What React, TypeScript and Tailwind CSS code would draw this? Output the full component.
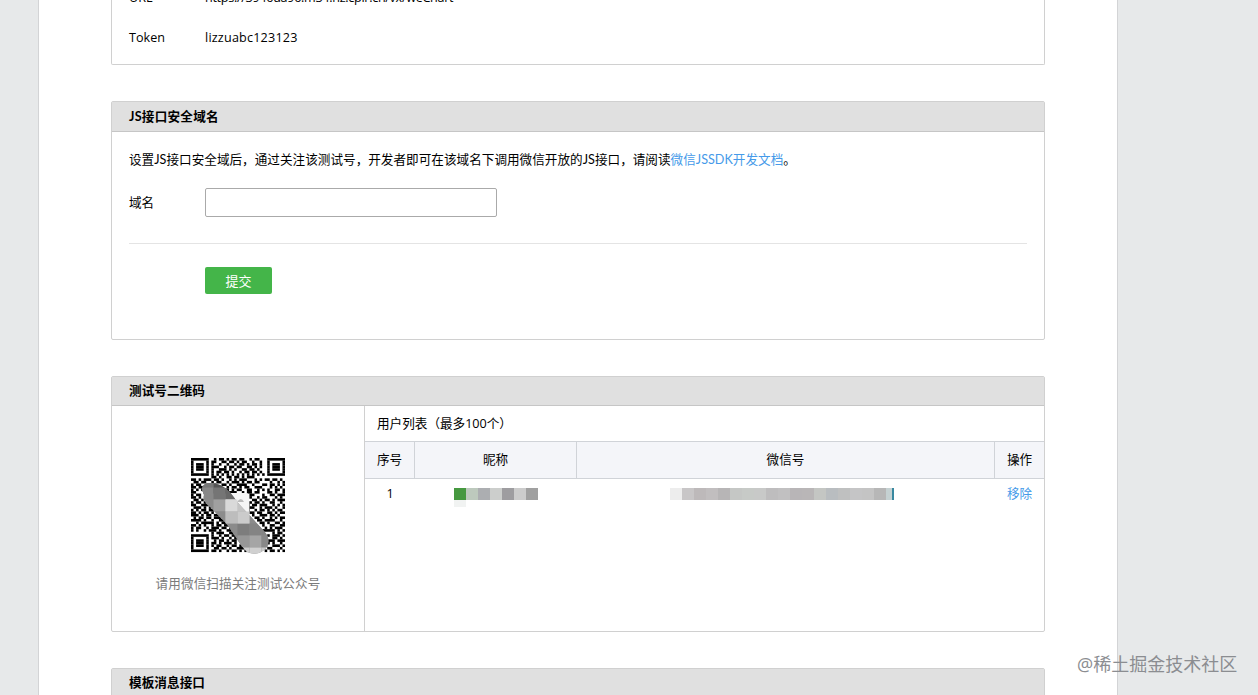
import type { ReactNode } from "react";

const qrRows = [
  "1111111001011010110110010110001111111",
  "1000001011001101101011001001001000001",
  "1011101010010010010110101101001011101",
  "1011101011100101101100110101001011101",
  "1011101010011101010011011010001011101",
  "1000001010110110100101101101001000001",
  "1111111010101010101010101010101111111",
  "0000000011010011011010111000000000000",
  "1101011101101001010111000101011011010",
  "0110110010110010111010110110000100101",
  "1011001101001101001111001000110110101",
  "1101100010110010110101100111000101010",
  "1010111001000110101100110010101001101",
  "1100010110000001110010110110001101001",
  "1011000100000000111101011000100110111",
  "1101000000000000010110010010110001010",
  "0110100000000000000111001101011010111",
  "1011010000000000000011010110100110010",
  "1100111000000000000000101101110010101",
  "0111010100000000000001011001011101001",
  "1010110110000000000001100101101010110",
  "1101011010000000000000011011001101011",
  "1110101101100000000000001001110110100",
  "0101101101110000000000000110100101011",
  "1111010010011100000000000011011110010",
  "0010111110101100000000000001101001101",
  "1101010010110110000000000000100110011",
  "1011001011101101100000000000010101110",
  "1010010111010011010000000000111110101",
  "0000000010111001101000000000100010110",
  "1111111010010110110100000000101011101",
  "1000001011101001011000000000100011010",
  "1011101001011010110110000000111110111",
  "1011101011010111010011000001011010010",
  "1011101010110010110100100011010011101",
  "1000001001101101001110110101101100010",
  "1111111011010010110101001110010110101",
];

const mosaic: [number, number, string][] = [
  [0, 6, "#777"], [12, 6, "#555"], [24, 6, "#5a5a5a"],
  [0, 12, "#888"], [12, 12, "#757575"], [24, 12, "#686868"], [36, 12, "#777"],
  [12, 24, "#a0a0a0"], [24, 24, "#d9d9d9"], [36, 24, "#c4c4c4"],
  [12, 36, "#8c8c8c"], [24, 36, "#aaa"], [36, 36, "#cbcbcb"], [48, 36, "#8b8b8b"],
  [24, 48, "#8b8b8b"], [36, 48, "#7d7d7d"], [48, 48, "#848484"], [60, 48, "#858585"],
  [36, 60, "#979797"], [48, 60, "#a5a5a5"], [60, 60, "#888"], [36, 72, "#ccc"], [48, 72, "#d0d0d0"], [60, 72, "#c8c8c8"],
];

function QrCode() {
  return (
    <svg className="block h-[94px] w-[94px] overflow-visible" viewBox="0 0 94 94">
      <defs>
        <clipPath id="stroke-mask">
          <path d="M13 37 Q7 25 20 25 C34 26 39 34 48 46 L73 73 Q80 81 76 89 Q68 99 56 94 C48 86 43 75 34 64 L19 49 Q11 43 13 37Z" />
        </clipPath>
      </defs>
      <g transform="scale(2.5405)" shapeRendering="geometricPrecision">
        {qrRows.flatMap((row, y) =>
          (row.match(/1+|0+/g) ?? []).reduce<{ x: number; nodes: ReactNode[] }>(
            (acc, run) => {
              if (run[0] === "1") {
                acc.nodes.push(<rect key={`${y}-${acc.x}`} x={acc.x} y={y} width={run.length} height="1.03" />);
              }
              acc.x += run.length;
              return acc;
            },
            { x: 0, nodes: [] },
          ).nodes,
        )}
      </g>
      <rect x="35" y="35" width="23" height="23" rx="3" fill="#f5f5f5" />
      <path d="M46 44q4-6 7 0" fill="#bbb" />
      <g clipPath="url(#stroke-mask)">
        <rect width="94" height="100" fill="#8b8b8b" />
        {mosaic.map(([x, y, fill]) => (
          <rect key={`${x}-${y}`} x={x + 10.5} y={y + 17.5} width="12" height="12" fill={fill} />
        ))}
      </g>
      <rect x="34.5" y="41.5" width="12" height="12" fill="#d9d9d9" />
      <rect x="46.5" y="53.5" width="12" height="12" fill="#cbcbcb" />
      <rect x="34.5" y="53.5" width="12" height="12" fill="#bdbdbd" />
    </svg>
  );
}

function Header({ children }: { children: ReactNode }) {
  return (
    <div className="flex h-[29px] items-center border-b border-[#c6c6c6] bg-[#e0e0e0] pl-[17px] font-bold tracking-[0.08px]">
      {children}
    </div>
  );
}

function Js({ children }: { children: string }) {
  return <span className="font-['Lato',sans-serif]">{children}</span>;
}

const nameCells = ["bg-[#469940]", "bg-[#bdc9bd]", "bg-[#acaeb1]", "bg-[#cccecc]", "bg-[#9e9da0]", "bg-[#cccccc]", "bg-[#a0a0a0]"];
const idCells = [
  "w-3 bg-[#ededed]", "w-3 bg-[#c8c6c7]", "w-3 bg-[#bdb9ba]", "w-3 bg-[#c1bebf]", "w-3 bg-[#b7b5b6]",
  "w-3 bg-[#c5c7c5]", "w-3 bg-[#c7cac7]", "w-3 bg-[#c8c9c8]", "w-3 bg-[#bebdbe]", "w-3 bg-[#c1c0c1]",
  "w-3 bg-[#b8b5b7]", "w-3 bg-[#b9b6b7]", "w-3 bg-[#c4c6c3]", "w-3 bg-[#b9bdc0]", "w-3 bg-[#bfc0c0]",
  "w-3 bg-[#c5c5c6]", "w-3 bg-[#c4c4c4]", "w-3 bg-[#b7b7b7]", "w-[6px] bg-[#c5d1d2]", "w-[2px] bg-[#3888a0]",
];

export default function App() {
  return (
    <div className="relative h-[695px] w-full overflow-hidden bg-[#e7e9ea] font-['Open_Sans','Noto_Sans_CJK_SC',sans-serif] text-[12.6px] leading-5 text-black">
      <main className="ml-[38px] h-[695px] w-[1080px] border-x border-[#d3d4d6] bg-white px-[72px]">
        <section className="h-[65px] overflow-hidden rounded-b-[2px] border-x border-b border-[#d0d0d0] pl-[17px]">
          <div className="-mt-3 flex h-5">
            <span className="w-[76px]">URL</span>
            <span className="tracking-[-0.3px]">https://3946da96.m34.nz.cplr.cn/vx/weChart</span>
          </div>
          <div className="mt-5 flex h-5">
            <span className="w-[76px]">Token</span>
            <span className="tracking-[0.2px]">lizzuabc123123</span>
          </div>
        </section>

        <section className="mt-9 h-[239px] rounded-[2px] border border-[#d0d0d0]">
          <div className="flex h-[30px] items-center border-b border-[#c6c6c6] bg-[#e0e0e0] pl-[17px] font-bold tracking-[0.25px]">
            <Js>JS</Js>接口安全域名
          </div>
          <div className="px-[17px]">
            <p className="pt-[18px] tracking-[0.02px] whitespace-nowrap">
              设置<Js>JS</Js>接口安全域后，通过关注该测试号，开发者即可在该域名下调用微信开放的<Js>JS</Js>接口，请阅读<a className="text-[#459ae9]">微信<Js>JSSDK</Js>开发文档</a>。
            </p>
            <div className="mt-[18px] flex items-center">
              <label className="w-[76px]">域名</label>
              <input className="h-[29px] w-[292px] rounded-[2px] border border-[#aaa] bg-white" />
            </div>
            <div className="mt-[26px] border-t border-[#e4e4e4] pt-[23px] pl-[76px]">
              <button className="flex h-[27px] w-[67px] items-center justify-center rounded-[2px] bg-[#44b549] text-[13px] text-white">提交</button>
            </div>
          </div>
        </section>

        <section className="mt-9 flex h-[256px] flex-col rounded-[2px] border border-[#d0d0d0]">
          <Header>测试号二维码</Header>
          <div className="flex flex-1">
            <div className="flex w-[253px] flex-col items-center border-r border-[#d0d0d0] pt-[52px]">
              <QrCode />
              <p className="mt-[22px] tracking-[0.08px] text-[#7b7b7b]">请用微信扫描关注测试公众号</p>
            </div>
            <div className="flex-1">
              <div className="flex h-9 items-center border-b border-[#d0d3d8] pt-px pl-3">用户列表（最多100个）</div>
              <div className="grid h-[37px] grid-cols-[50px_162px_418px_49px] border-b border-[#d0d3d8] bg-[#f4f5f9] text-center leading-9">
                <span className="border-r border-[#d0d3d8]">序号</span>
                <span className="border-r border-[#d0d3d8]">昵称</span>
                <span className="border-r border-[#d0d3d8]">微信号</span>
                <span>操作</span>
              </div>
              <div className="grid h-[30px] grid-cols-[50px_162px_418px_49px] text-center leading-[30px]">
                <span>1</span>
                <div className="pt-[9px] pl-[39px]">
                  <div className="flex">
                    {nameCells.map((c, i) => <i key={i} className={`h-3 w-3 ${c}`} />)}
                  </div>
                  <i className="block h-[7px] w-3 bg-[#f1f3f2]" />
                </div>
                <div className="flex pt-[9px] pl-[93px]">
                  {idCells.map((c, i) => <i key={i} className={`h-3 shrink-0 ${c}`} />)}
                </div>
                <a className="text-[#459ae9]">移除</a>
              </div>
            </div>
          </div>
        </section>

        <section className="mt-9 h-[100px] rounded-[2px] border border-[#d0d0d0]">
          <Header>模板消息接口</Header>
        </section>
      </main>
      <div className="absolute top-[652px] left-[1077px] text-[18px] leading-6 whitespace-nowrap text-[#8b8d91]">@稀土掘金技术社区</div>
    </div>
  );
}
